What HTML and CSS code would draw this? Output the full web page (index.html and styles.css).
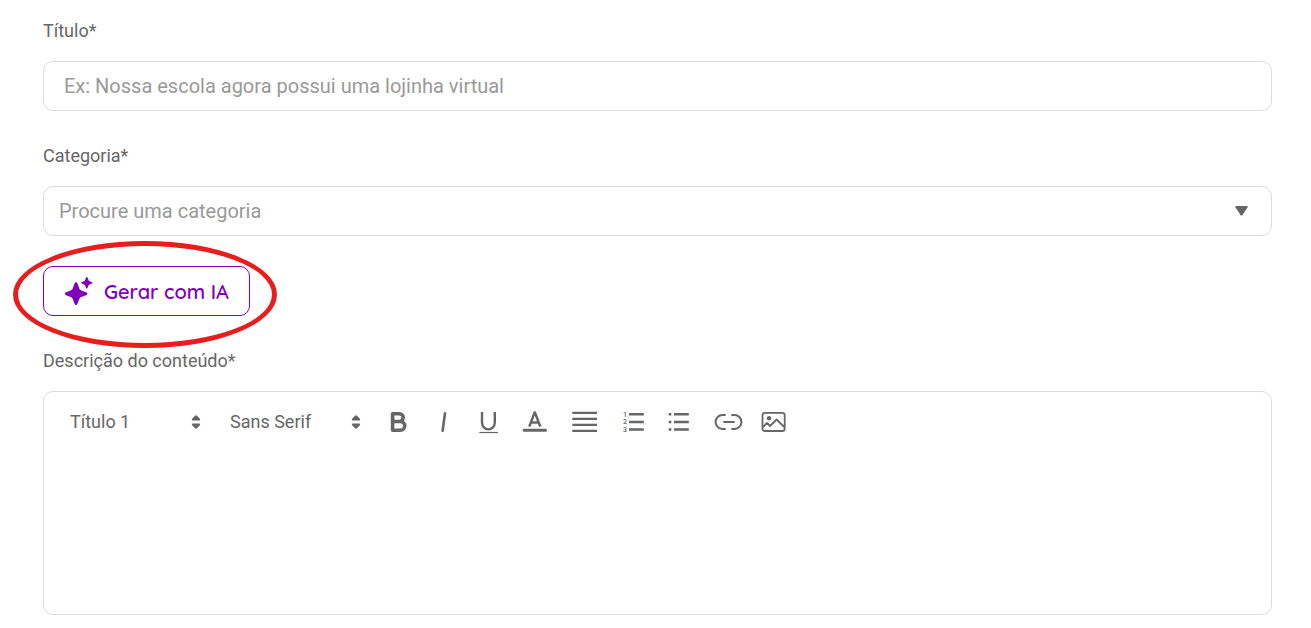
FILE: index.html
```html
<!DOCTYPE html>
<html lang="pt-BR">
<head>
  <meta charset="UTF-8" />
  <meta name="viewport" content="width=device-width, initial-scale=1" />
  <title>Novo conteúdo</title>
  <link rel="stylesheet" href="styles.css">
</head>
<body>

  <form class="content-form">
    <div class="field">
      <label for="titulo">Título*</label>
      <input class="control" type="text" id="titulo" placeholder="Ex: Nossa escola agora possui uma lojinha virtual" />
    </div>

    <div class="field">
      <label for="categoria">Categoria*</label>
      <div class="select-wrap">
        <select class="control category" id="categoria">
          <option selected>Procure uma categoria</option>
        </select>
        <svg class="caret" width="13" height="10" viewBox="0 0 13 10"><path d="M1.2 0h10.6q1.4.2.7 1.5L7.5 9q-1 1.2-2 0L.5 1.5Q-.2.2 1.2 0z"/></svg>
      </div>
    </div>

    <div class="ai-action">
      <button type="button" class="ai-button">
        <svg width="28" height="28" viewBox="0 0 28 28">
          <path d="M11 5.2c.9 0 1.3.6 1.6 1.5l1.6 4.6c.4 1.2 1 1.8 2.2 2.2l4.5 1.7c.9.3 1.4.7 1.4 1.5s-.5 1.2-1.4 1.5l-4.5 1.7c-1.2.4-1.8 1-2.2 2.2l-1.6 4.4c-.3.9-.7 1.5-1.6 1.5s-1.3-.6-1.6-1.5l-1.6-4.4c-.4-1.2-1-1.8-2.2-2.2l-4.5-1.7C.4 17.900 0 17.500 0 16.700s.4-1.200 1.100-1.500l4.500-1.700c1.200-.4 1.800-1 2.200-2.200l1.600-4.600c.3-.9.7-1.500 1.600-1.500z"/>
          <path d="M21.800 0c.5 0 .7.400.9.900l.8 2.200c.2.600.5.900 1.100 1.100l2.100.8c.5.200.8.400.8.800s-.3.600-.8.800l-2.100.8c-.6.200-.9.500-1.100 1.100l-.8 2.100c-.2.500-.4.900-.9.900s-.7-.4-.9-.9l-.8-2.100c-.2-.6-.5-.9-1.100-1.100l-2.100-.8c-.5-.2-.7-.4-.7-.8s.2-.6.700-.8l2.100-.8c.6-.2.900-.5 1.100-1.100l.8-2.200c.2-.5.400-.9.900-.9z"/>
        </svg>
        Gerar com IA
      </button>
      <span class="highlight"></span>
    </div>

    <div class="field">
      <label for="descricao">Descrição do conteúdo*</label>
      <div class="editor">
        <div class="toolbar">
          <div class="picker">
            <select aria-label="Estilo do texto">
              <option selected>Título 1</option>
            </select>
            <svg width="10" height="14" viewBox="0 0 10 14"><path d="M4 .8q1-.9 2 0l2.900 2.900q.8 1.800-.9 1.800H2Q.3 5.500 1.100 3.700zM4 13.200q1 .9 2 0l2.900-2.900q.8-1.800-.9-1.800H2q-1.700 0-.9 1.800z"/></svg>
          </div>
          <div class="picker">
            <select aria-label="Fonte">
              <option selected>Sans Serif</option>
            </select>
            <svg width="10" height="14" viewBox="0 0 10 14"><path d="M4 .8q1-.9 2 0l2.900 2.900q.8 1.800-.9 1.800H2Q.3 5.500 1.100 3.700zM4 13.200q1 .9 2 0l2.900-2.900q.8-1.800-.9-1.800H2q-1.700 0-.9 1.800z"/></svg>
          </div>

          <div class="tools">
            <div class="tool-group">
              <button type="button" aria-label="Negrito">
                <svg viewBox="0 0 30 30"><path stroke-width="3.600" stroke-linejoin="round" d="M9.600 6.700h6.700a3.900 3.900 0 0 1 0 7.800H9.600zM9.600 14.500h7.700a4.400 4.400 0 0 1 0 8.800H9.600z"/></svg>
              </button>
              <button type="button" aria-label="Itálico">
                <svg viewBox="0 0 30 30"><path stroke-width="2.600" stroke-linecap="round" d="M17 6.200l-2.400 17.600"/></svg>
              </button>
              <button type="button" aria-label="Sublinhado">
                <svg viewBox="0 0 30 30"><path stroke-width="2.400" d="M9 5v10.500a6.400 6.900 0 0 0 12.800 0V5"/><path stroke-width="1.200" d="M6.300 25.500H25"/></svg>
              </button>
              <button type="button" aria-label="Cor do texto">
                <svg viewBox="0 0 30 30"><path stroke-width="2.500" stroke-linejoin="round" d="M11.300 19.600L16.600 5.600h.4L22.300 19.600M13 15.500h7.600"/><path stroke-width="3" stroke-linecap="round" d="M6.200 23.200h21.300"/></svg>
              </button>
            </div>
            <div class="tool-group">
              <button type="button" aria-label="Alinhamento">
                <svg viewBox="0 0 30 30"><path stroke-width="2.200" d="M4.300 5.900H29M4.300 11.900H29M4.300 17.900H29M4.300 23.900H29"/></svg>
              </button>
            </div>
            <div class="tool-group">
              <button type="button" aria-label="Lista numerada">
                <svg viewBox="0 0 30 30"><path stroke-width="2.400" d="M11 7.300h14.800M11 15h14.800M11 22.500h14.800"/><g class="digits"><text x="5" y="10">1</text><text x="5" y="17">2</text><text x="5" y="25">3</text></g></svg>
              </button>
              <button type="button" aria-label="Lista com marcadores">
                <svg viewBox="0 0 30 30"><path stroke-width="2.400" d="M11 7.300h14.800M11 15h14.800M11 22.500h14.800M5.700 7.300h2.600M5.700 15h2.600M5.700 22.500h2.600"/></svg>
              </button>
            </div>
            <div class="tool-group">
              <button type="button" aria-label="Link">
                <svg viewBox="0 0 30 30"><path stroke-width="2" d="M12.700 8H9.500a6.900 6.900 0 0 0 0 13.900h3.200M18.300 8h3.200a6.900 6.900 0 0 1 0 13.900h-3.200M10.300 15h11.400"/></svg>
              </button>
              <button type="button" aria-label="Imagem">
                <svg viewBox="0 0 30 30"><rect stroke-width="1.800" x="4.500" y="5.800" width="22.200" height="18.200" rx="2.500"/><circle class="solid" cx="11" cy="11.200" r="2.200"/><path stroke-width="1.800" stroke-linejoin="round" d="M5 20l4-4 3 3 6.700-6.500 7.500 7.500"/></svg>
              </button>
            </div>
          </div>
        </div>
        <textarea id="descricao"></textarea>
      </div>
    </div>
  </form>

</body>
</html>
```
FILE: styles.css
```css
* {
  box-sizing: border-box;
}
body {
  font-family: Roboto, "Liberation Sans", sans-serif;
  background-color: #fff;
  color: #666;
  margin: 0;
}
input, select, button, textarea {
  font-family: inherit;
  color: inherit;
  margin: 0;
}
select {
  appearance: none;
  background: none;
  cursor: pointer;
}
.content-form {
  padding: 19px 39px 13px 43px;
}
.field {
  margin-bottom: 33px;
}
.field:last-child {
  margin-bottom: 0;
}
label {
  display: block;
  font-size: 18px;
  line-height: 24px;
  margin-bottom: 18px;
}
.control {
  display: block;
  width: 100%;
  height: 50px;
  padding: 0 20px;
  font-size: 20px;
  border: 1px solid #dcdcdc;
  border-radius: 10px;
  background-color: #fff;
}
.control::placeholder {
  color: #999;
  opacity: 1;
}
.category {
  padding: 0 15px;
  color: #999;
}

/* select and its arrow share one grid cell */
.select-wrap, .picker {
  display: grid;
  align-items: center;
}
.select-wrap > *, .picker > * {
  grid-area: 1 / 1;
}
.select-wrap svg, .picker svg {
  justify-self: end;
  fill: #666;
  pointer-events: none;
}
.caret {
  margin-right: 24px;
}

.ai-action {
  position: relative;
  width: fit-content;
  margin: -3px 0 33px;
}
.ai-button {
  display: flex;
  align-items: center;
  gap: 11px;
  height: 50px;
  padding: 0 20px 0 21px;
  font-family: Quicksand, Lato, sans-serif;
  font-size: 20px;
  font-weight: 600;
  color: #8000be;
  background-color: #fff;
  border: 1px solid #8000be;
  border-radius: 10px;
  cursor: pointer;
}
.ai-button svg {
  fill: #8000be;
}
.highlight {
  position: absolute;
  inset: -25px -27px -32px -30px;
  border: 5px solid #e61e1e;
  border-radius: 50%;
  pointer-events: none;
}

.editor {
  border: 1px solid #dcdcdc;
  border-radius: 10px;
}
.toolbar {
  display: flex;
  flex-wrap: wrap;
  align-items: center;
  gap: 29px;
  padding: 15px 26px;
}
.picker {
  width: 131px;
}
.picker select {
  width: 100%;
  height: 30px;
  padding: 0 0 2px;
  border: none;
  font-size: 18px;
}
.tools {
  display: flex;
  gap: 20px;
  margin-left: -7px;
}
.tool-group {
  display: flex;
  gap: 15px;
}
.tool-group button {
  width: 30px;
  height: 30px;
  padding: 0;
  border: none;
  background: none;
  cursor: pointer;
}
.tool-group svg {
  display: block;
  width: 30px;
  height: 30px;
  fill: none;
  stroke: #666;
}
.digits {
  font-size: 7px;
  font-weight: 500;
  fill: #666;
  stroke: none;
}
.tool-group .solid {
  fill: #666;
  stroke: none;
}
textarea {
  display: block;
  width: 100%;
  height: 162px;
  padding: 10px 25px;
  font-size: 18px;
  border: none;
  border-radius: 10px;
  outline: none;
  resize: none;
  background: none;
}
```
